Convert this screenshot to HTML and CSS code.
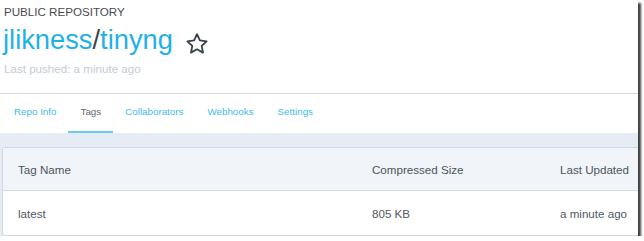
FILE: index.html
```html
<!DOCTYPE html>
<html>
<head>
    <meta charset="utf-8" />
    <title>jlikness/tinyng</title>
    <link rel="stylesheet" href="styles.css">
</head>
<body>
    <div class="frame">
      <!-- 仓库标题 -->
      <div class="repo_head">
        <div class="kicker">PUBLIC REPOSITORY</div>
        <div class="title">
          <span class="name"><a>jlikness</a><span class="slash">/</span><a>tinyng</a></span>
          <svg class="star" width="24" height="24" viewBox="0 0 24 24">
            <path d="M12 2.2l2.9 6.2 6.7.9-4.9 4.6 1.3 6.7L12 17.3l-6 3.3 1.3-6.7-4.9-4.6 6.7-.9z" />
          </svg>
        </div>
        <div class="pushed">Last pushed: a minute ago</div>
      </div>

      <!-- 选项卡 -->
      <ul class="tabs">
        <li>Repo Info</li>
        <li class="cur">Tags</li>
        <li>Collaborators</li>
        <li>Webhooks</li>
        <li>Settings</li>
      </ul>

      <!-- 标签表格 -->
      <div class="tag_area">
        <div class="tag_table">
          <div class="tag_row tag_head">
            <span>Tag Name</span>
            <span>Compressed Size</span>
            <span>Last Updated</span>
          </div>
          <div class="tag_row">
            <span>latest</span>
            <span>805 KB</span>
            <span>a minute ago</span>
          </div>
        </div>
      </div>
    </div>
</body>
</html>
```

FILE: styles.css
```css
* {
  margin: 0;
  padding: 0;
  box-sizing: border-box;
}
body {
  background: #fff;
  font-family: "Liberation Sans", Arial, sans-serif;
}
/* 截图外框 */
.frame {
  width: 638px;
  height: 236px;
  overflow: hidden;
  background: #fff;
  box-shadow: 3px 3px 2px rgba(0, 0, 0, 0.75);
}
/* 仓库标题 */
.repo_head {
  padding: 5px 0 17px 4px;
  border-bottom: 1px solid #d3d9e0;
}
.kicker {
  font-size: 11.6px;
  line-height: 14px;
  color: #474b50;
}
.title {
  display: flex;
  align-items: center;
  margin-top: 5px;
  height: 32px;
}
.name {
  font-size: 27.3px;
  line-height: 32px;
  margin-left: -1px;
}
.name a {
  color: #1fb1e8;
}
.slash {
  color: #3e4247;
}
.star {
  margin-left: 12px;
  margin-top: 7px;
  fill: none;
  stroke: #36404c;
  stroke-width: 1.8;
  stroke-linejoin: round;
}
.pushed {
  margin-top: 6px;
  font-size: 11.6px;
  line-height: 14px;
  color: #c3cbd5;
}
/* 选项卡 */
.tabs {
  display: flex;
  padding-left: 2px;
  list-style: none;
}
.tabs li {
  padding: 11px 12px 12px;
  font-size: 9.8px;
  line-height: 14px;
  color: #3fbbe9;
  border-bottom: 2px solid transparent;
}
.tabs .cur {
  color: #62676e;
  border-bottom-color: #6ccaee;
}
/* 表格 */
.tag_area {
  background: #e6ecf3;
  padding: 14px 0 0 2px;
}
.tag_table {
  width: 700px;
  background: #fff;
  border: 1px solid #cfd8e2;
  border-radius: 3px;
}
.tag_row {
  display: grid;
  grid-template-columns: 354px 188px 1fr;
  padding-left: 15px;
  height: 44px;
  align-items: center;
  font-size: 11.6px;
  color: #4f5964;
}
.tag_head {
  height: 43px;
  background: #f1f5f9;
  border-bottom: 1px solid #d2dae3;
  color: #4a5460;
}
```
